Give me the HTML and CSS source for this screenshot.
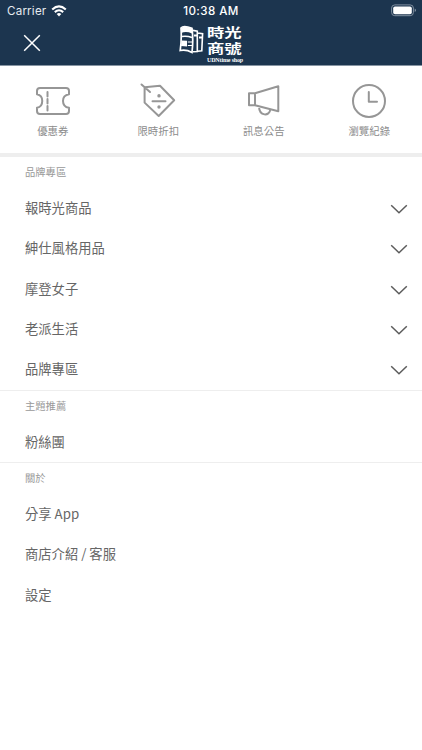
FILE: index.html
```html
<!DOCTYPE html>
<html lang="zh-Hant">
<head>
<meta charset="utf-8">
<meta name="viewport" content="width=device-width">
<title>時光商號</title>
<link rel="stylesheet" href="styles.css">
</head>
<body>
<svg width="0" height="0" class="defs"><symbol id="chevron" viewBox="0 0 18 10"><path d="M1.2 1.2 9 8.7 16.8 1.2" fill="none" stroke="#5c5c5c" stroke-width="1.5"/></symbol></svg>
<header class="header">
  <div class="status">
    <div class="carrier"><span>Carrier</span>
      <svg class="wifi" width="16" height="12" viewBox="0 0 16 12" fill="none" stroke="#fff" stroke-width="2.1"><path d="M1.2 4.5Q8-1.6 14.8 4.5M3.8 7.1Q8 3.4 12.2 7.1"/><path d="M5.7 9 8 11.4 10.3 9Q8 7 5.7 9Z" fill="#fff" stroke="none"/></svg>
    </div>
    <time class="time">10:38 AM</time>
    <svg class="battery" width="26" height="13" viewBox="0 0 26 13"><rect x=".6" y=".9" width="21.8" height="10.8" rx="3.2" fill="none" stroke="#8190a0"/><rect x="2.2" y="2.4" width="18.6" height="7.8" rx="1.8" fill="#fff"/><path d="M23.7 4.6Q25 5.2 25 6.3T23.7 8Z" fill="#8190a0"/></svg>
  </div>
  <div class="nav">
    <svg class="close" width="18" height="18" viewBox="0 0 18 18"><path d="M1.2 1.2 16.8 16.8M16.8 1.2 1.2 16.8" stroke="#fff" stroke-width="1.5"/></svg>
    <div class="logo">
      <svg width="25" height="29" viewBox="0 0 25 29" fill="none" stroke="#fff"><path d="M2 3Q4.5-.2 13 3.4Q14.5 15 13 27.4Q7 24.2 1.2 25.5Q2.8 14 2 3Z" stroke-width="1.7"/><path d="M2.2 3Q6 .2 13 3.8V8.4Q7 6 2.2 8Z" fill="#fff" stroke="none"/><path d="M3 11.5Q8 10.7 13 12.6" stroke-width="1.6"/><path d="M2.6 15.4 8 15.8V21.4L2 21Z" fill="#fff" stroke="none"/><path d="M8.8 17H13M8.8 20.5H13" stroke-width="1"/><path d="M14 5.4 18.3 6.2V26.5L14 26.8M18.6 8 23.6 8.6 22.8 25.8 18.6 26.3" stroke-width="1.6"/><path d="M15 10.5H18M20 12.5H23" stroke-width="2"/></svg>
      <div class="wordmark"><span>時光</span><span>商號</span><small>UDNtime shop</small></div>
    </div>
  </div>
</header>
<nav class="shortcuts">
  <a class="shortcut"><svg width="36" height="36" viewBox="0 0 36 36"><path d="M5 5H31Q34 5 34 8V11.2C26 12.5 26 23.5 34 24.8V28Q34 31 31 31H5Q2 31 2 28V24.8C9 23.5 9 12.5 2 11.2V8Q2 5 5 5Z"/><path d="M12.5 9V13.5M12.5 16V20.5M12.5 23V27.5"/></svg><span>優惠券</span></a>
  <a class="shortcut"><svg width="36" height="36" viewBox="0 0 36 36"><path d="M4.6 4.2 20 2.7 34.2 17.2 18.7 33 4.6 19.6ZM1.5 1.5 10 9M12.5 18.3H25.5"/><path d="M19 12.8V12.9M19 24V24.1" stroke-width="3.4"/></svg><span>限時折扣</span></a>
  <a class="shortcut"><svg width="36" height="36" viewBox="0 0 36 36"><path d="M3 10.3H9V22.2H3ZM9 10.3 32.3 3.3V28.2L9 22.2M13 23.5C13.2 33.5 23.7 33.5 24.3 26.5"/></svg><span>訊息公告</span></a>
  <a class="shortcut"><svg width="36" height="36" viewBox="0 0 36 36"><circle cx="18" cy="18" r="16"/><path d="M17.8 9V18.8H26"/></svg><span>瀏覽紀錄</span></a>
</nav>
<main>
  <section>
    <h2>品牌專區</h2>
    <ul>
      <li>報時光商品<svg class="chevron"><use href="#chevron"/></svg></li>
      <li>紳仕風格用品<svg class="chevron"><use href="#chevron"/></svg></li>
      <li>摩登女子<svg class="chevron"><use href="#chevron"/></svg></li>
      <li>老派生活<svg class="chevron"><use href="#chevron"/></svg></li>
      <li>品牌專區<svg class="chevron"><use href="#chevron"/></svg></li>
    </ul>
  </section>
  <section>
    <h2>主題推薦</h2>
    <ul><li>粉絲團</li></ul>
  </section>
  <section>
    <h2>關於</h2>
    <ul><li>分享 App</li><li>商店介紹 / 客服</li><li>設定</li></ul>
  </section>
</main>
</body>
</html>
```
FILE: styles.css
```css
* { box-sizing: border-box; }
body { margin: 0; min-height: 750px; background: #fff; color: #666; font-family: Inter, "Noto Sans CJK TC", sans-serif; }
.defs { display: none; }
.header { height: 66px; background: #1c354f; border-bottom: 1px solid #8795a3; color: #fff; }
.status { height: 22px; display: grid; grid-template-columns: 1fr auto 1fr; align-items: center; padding: 0 5px 0 7px; }
.carrier { display: flex; align-items: center; gap: 5px; font-size: 11.6px; letter-spacing: .2px; color: #e6ebef; }
.wifi { margin-top: -1px; }
.time { font-size: 11.6px; font-weight: 500; letter-spacing: .4px; margin-left: -2px; }
.battery { justify-self: end; margin-top: -1px; }
.nav { height: 43px; display: grid; grid-template-columns: 1fr auto 1fr; align-items: center; padding: 0 24px 0 23px; }
.close { margin-top: -2px; }
.logo { display: flex; align-items: flex-start; gap: 3px; height: 39px; width: 63px; }
.logo > svg { flex: none; margin-top: 1px; }
.wordmark { display: flex; flex-direction: column; font: 700 14px/16.5px "Noto Sans CJK TC", sans-serif; margin-top: -.5px; }
.wordmark span { height: 16.5px; transform: scale(1.24, .92); transform-origin: left 7px; }
.wordmark small { margin-top: .5px; font: 700 6px/6px "Liberation Serif", serif; letter-spacing: -.15px; white-space: nowrap; }
.shortcuts { height: 91px; display: grid; grid-template-columns: repeat(4, 1fr); border-bottom: 4px solid #eee; }
.shortcut { display: flex; flex-direction: column; align-items: center; padding-top: 17px; gap: 3px; font-family: "Noto Sans CJK TC", sans-serif; font-size: 10.4px; line-height: 17px; color: #8c8c8c; }
.shortcut svg { fill: none; stroke: #969696; stroke-width: 2; stroke-linecap: round; stroke-linejoin: round; }
section + section { border-top: 1px solid #eee; }
h2 { margin: 0; padding-left: 25px; height: 30.2px; font-size: 10.3px; font-weight: 400; line-height: 31px; color: #999; }
ul { margin: 0; padding: 0 0 .8px; list-style: none; }
li { height: 40.35px; padding: 0 14px 0 25px; display: flex; align-items: center; justify-content: space-between; font-family: "Noto Sans CJK TC", sans-serif; font-size: 13.3px; }
.chevron { width: 18px; height: 10px; margin-top: 3px; }
```
